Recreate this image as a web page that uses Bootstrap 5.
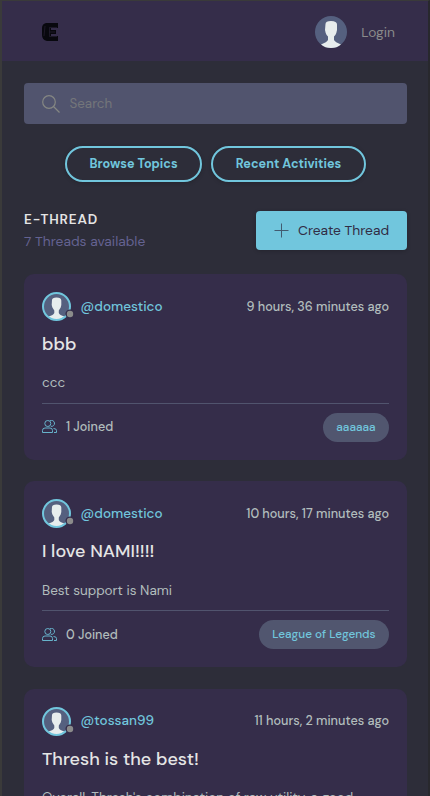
<!DOCTYPE html>
<html lang="en">
<head>
<meta charset="utf-8">
<meta name="viewport" content="width=device-width, initial-scale=1">
<title>E-Thread</title>
<link href="https://cdn.jsdelivr.net/npm/bootstrap@5.3.0/dist/css/bootstrap.min.css" rel="stylesheet">
<style>
html{overflow:hidden}
body{font-family:"DM Sans",Inter,"Liberation Sans",sans-serif;font-size:13px;line-height:20px;background:#2d2d39;color:#b2bdbd;height:796px;overflow:hidden;border:solid #3a3a3a;border-width:1px 0 0 2px;border-right:2px solid #28282d}
.topbar{height:60px;background:#352d4a;padding:1px 33px 0 40px}
.login{color:#8b8b8b;font-size:13.8px;gap:14px}
.page{padding:22px 21px 0 22px}
.search{height:41px;background:#51546e;border-radius:4px;padding:0 18px;gap:9.5px}
.search input{font-size:13.4px;color:#b2bdbd;line-height:20px}
.search input::placeholder{color:#74767a;opacity:1}
.pills{margin-top:22px;gap:9px}
.btn-pill{height:36px;border:2px solid #71c6dd;border-radius:18px;color:#71c6dd;font-size:12.6px;font-weight:700;line-height:18px;padding:0;box-shadow:0 1px 4px #0003}
.w-topics{width:137px}.w-recent{width:155px}
.heading{margin-top:29px;height:39px}
.heading h1{font-size:13.5px;line-height:18px;font-weight:600;letter-spacing:.85px;color:#e5e5e5;margin:0 0 2px}
.heading p{font-size:13.8px;line-height:20px;color:#646291;margin:0}
.btn-create{width:151px;height:39px;background:#71c6dd!important;border:0;border-radius:4px;color:#312d45;font-size:13.8px;padding:0 0 0 18px;gap:9px;box-shadow:0 1px 4px #0003}
.threads{margin-top:24px;gap:21.3px}
.thread{height:186px;flex:none;background:#352d4a;border-radius:10px;padding:18px}
.face{width:34px;height:29px}
.user{color:#71c6dd;font-size:13.5px;font-weight:500;margin-left:4.6px}
.ago{font-size:12.65px;font-weight:500}
.thread h2{font-size:18px;line-height:24px;font-weight:500;letter-spacing:.03px;color:#e5e5e5;margin:11px 0 17.4px}
.thread p{font-size:13.5px;line-height:20px;margin:0 0 9.6px}
.foot{border-top:1px solid #51546e;padding-top:9px}
.joined{font-size:12.6px;font-weight:500;gap:9px}
.topic{height:29px;background:#51566f;border-radius:15px;color:#71c6dd;font-size:11.75px;font-weight:500;padding:0 13.4px;line-height:29px}
</style>
<script src="https://cdn.jsdelivr.net/npm/bootstrap@5.3.0/dist/js/bootstrap.bundle.min.js"></script>
</head>
<body>
<svg class="d-none">
<symbol id="person" viewBox="0 0 32 32"><circle cx="16" cy="16" r="16" fill="#55607f"/><path d="M10.500 8Q10.500 5 16 5Q22 5 22 8.500V14L21.300 17Q20.500 19.500 19 20.500V24Q20 26 26 28.500Q22 32 16 32Q10 32 6 28.500Q12 26 13 24V20.500Q11.500 19.500 10.700 17L10 14Z" fill="#e7eded"/></symbol>
<symbol id="face" viewBox="0 0 34 29"><circle cx="14.500" cy="14.500" r="13.500" fill="#55607f"/><path d="M10 8Q10 5.500 14.500 5.500Q19.300 5.500 19.300 8.500V13L18.700 15.500L16.800 18.500V21Q17.500 23 22.500 24.500Q18.500 28 14.500 28Q10 28 6.500 24.500Q11.500 23 12.300 21V18.500L10.400 15.500L9.700 13Z" fill="#e7eded"/><circle cx="14.500" cy="14.500" r="13.500" fill="none" stroke="#71c6dd" stroke-width="2"/><circle cx="28" cy="22" r="4.600" fill="#352d4a"/><circle cx="28" cy="22" r="3.200" fill="#8b8b8b"/></symbol>
<symbol id="group" viewBox="0 0 15 14"><g fill="none" stroke="#67b3cb" stroke-width="1"><circle cx="5.800" cy="3.500" r="3"/><path d="M8 .8A3 3 0 1 1 8.800 6.300M.5 12.500V10.500Q.5 8 3 8H8Q10.500 8 10.500 10.500V12.500ZM11.500 8.500Q14.500 8.500 14.500 10.500V12.500H12"/></g></symbol>
</svg>
<header class="topbar d-flex align-items-center justify-content-between">
<svg width="16" height="18" viewBox="0 0 16 18"><path d="M4 0H16V5H9V7H14V11H9V13H16V18H5Q0 17 0 12V5Q0 1 4 0Z" fill="#08080e"/><path d="M15 4.500H7.500V13.500H15M7.500 9H13M3 3L2 13" fill="none" stroke="#302940" stroke-width=".5"/></svg>
<a href="#" class="d-flex align-items-center text-decoration-none login"><svg width="32" height="32"><use href="#person"/></svg><span>Login</span></a>
</header>
<main class="page">
<form class="search d-flex align-items-center">
<svg width="18" height="18" viewBox="0 0 18 18" fill="none" stroke="#858783" stroke-width="1.200"><circle cx="7" cy="7" r="6.300"/><path d="M11.500 11.500L17.500 17.500"/></svg>
<input class="border-0 bg-transparent p-0 flex-grow-1" placeholder="Search" aria-label="Search">
</form>
<div class="pills d-flex justify-content-center"><a class="btn btn-pill w-topics d-flex align-items-center justify-content-center">Browse Topics</a><a class="btn btn-pill w-recent d-flex align-items-center justify-content-center">Recent Activities</a></div>
<div class="heading d-flex justify-content-between">
<div><h1>E-THREAD</h1><p>7 Threads available</p></div>
<a class="btn btn-create d-flex align-items-center"><svg width="15" height="15" stroke="#425b70"><path d="M7.500 .5V14.500M.5 7.500H14.500"/></svg>Create Thread</a>
</div>
<section class="threads d-flex flex-column">
<article class="thread">
<div class="d-flex align-items-center"><svg class="face"><use href="#face"/></svg><span class="user">@domestico</span><span class="ago ms-auto">9 hours, 36 minutes ago</span></div>
<h2>bbb</h2><p>ccc</p>
<div class="foot d-flex align-items-center justify-content-between"><span class="joined d-flex align-items-center"><svg width="15" height="14"><use href="#group"/></svg>1 Joined</span><span class="topic">aaaaaa</span></div>
</article>
<article class="thread">
<div class="d-flex align-items-center"><svg class="face"><use href="#face"/></svg><span class="user">@domestico</span><span class="ago ms-auto">10 hours, 17 minutes ago</span></div>
<h2>I love NAMI!!!!</h2><p>Best support is Nami</p>
<div class="foot d-flex align-items-center justify-content-between"><span class="joined d-flex align-items-center"><svg width="15" height="14"><use href="#group"/></svg>0 Joined</span><span class="topic">League of Legends</span></div>
</article>
<article class="thread">
<div class="d-flex align-items-center"><svg class="face"><use href="#face"/></svg><span class="user">@tossan99</span><span class="ago ms-auto">11 hours, 2 minutes ago</span></div>
<h2>Thresh is the best!</h2><p class="text-nowrap">Overall, Thresh's combination of raw utility, a good</p>
</article>
</section>
</main>
</body>
</html>
